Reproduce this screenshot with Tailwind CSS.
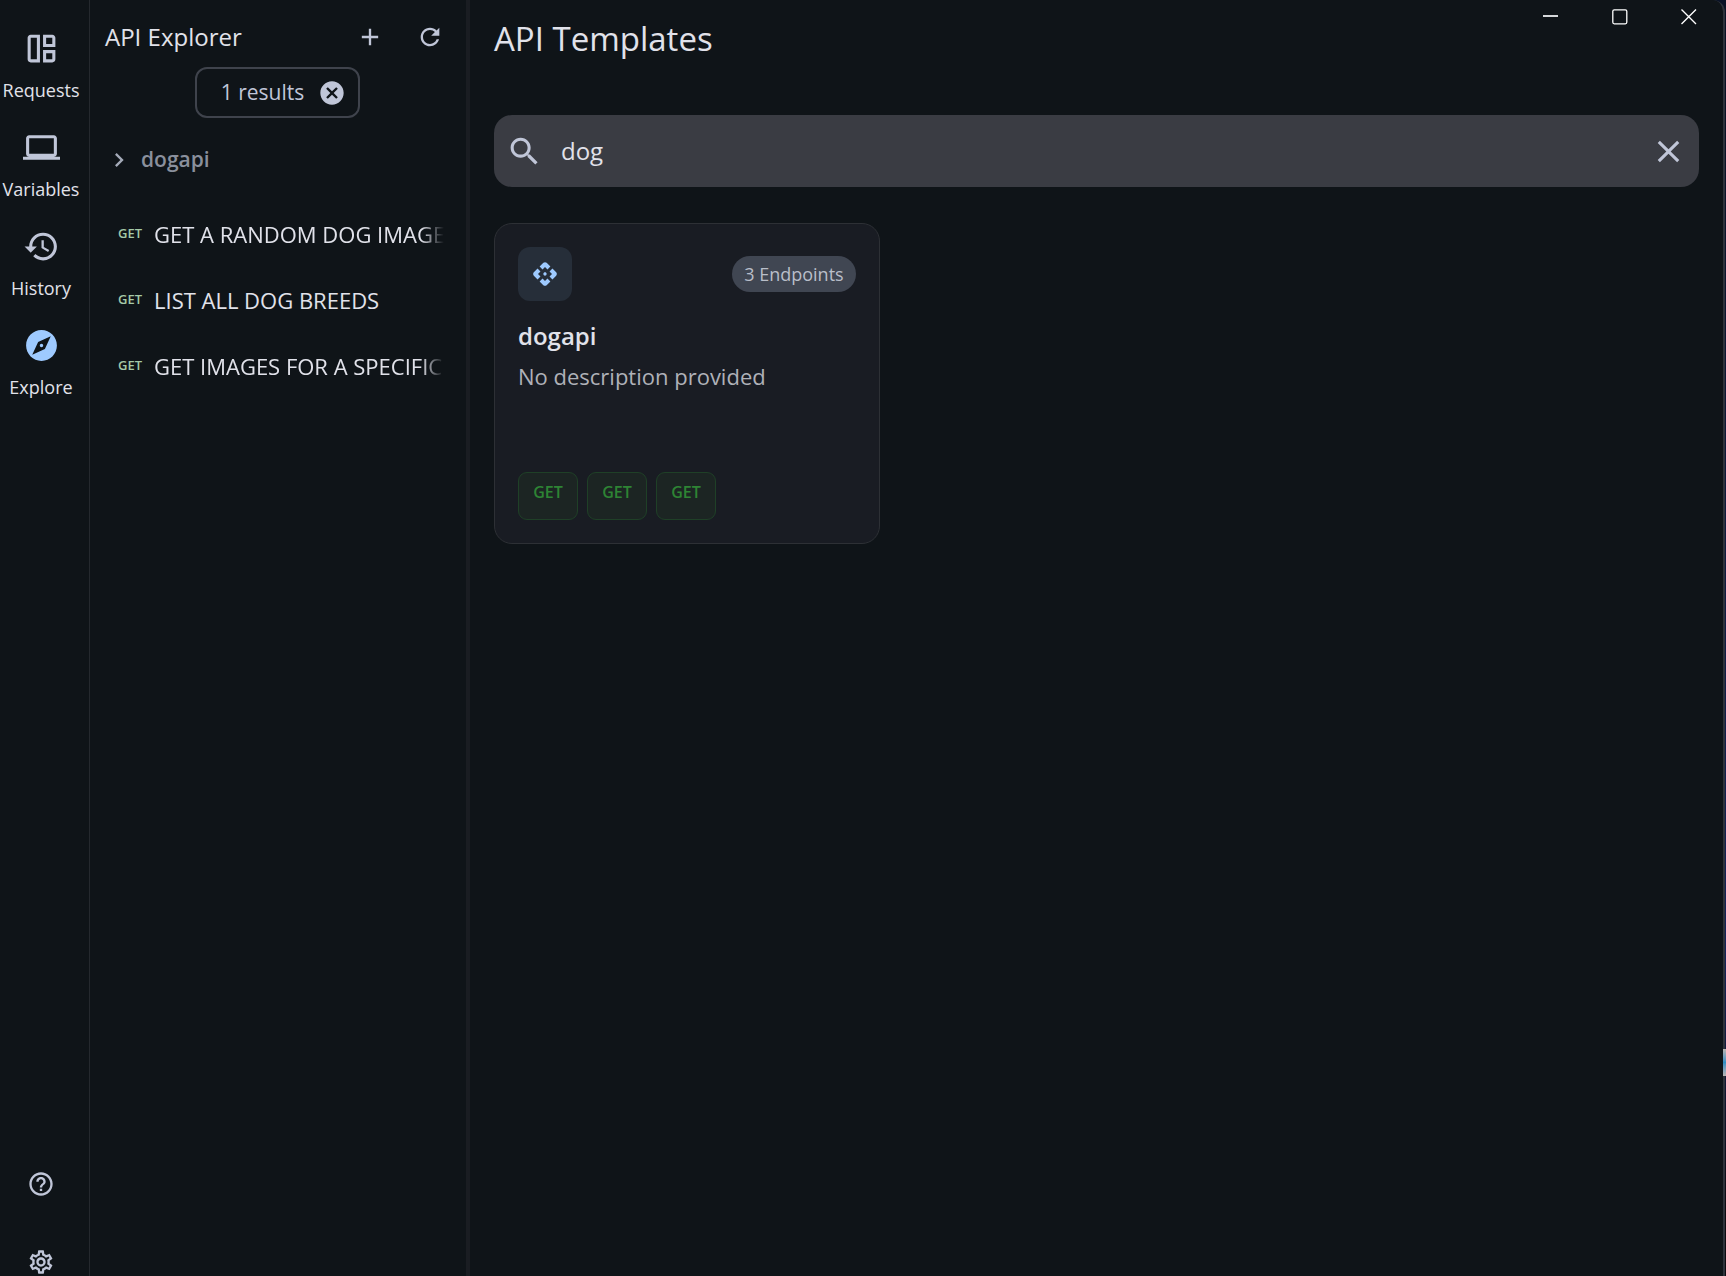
<!DOCTYPE html>
<html lang="en">
<head>
<meta charset="utf-8">
<meta name="viewport" content="width=device-width, initial-scale=1">
<title>API Explorer</title>
<script src="https://cdn.jsdelivr.net/npm/@tailwindcss/browser@4"></script>
</head>
<body class="relative h-screen overflow-hidden bg-linear-to-b from-[#0a1226] from-10% via-[#14235a] via-75% to-[#0c0a10] to-95% font-['Open_Sans',sans-serif] text-[#e1e2ea]">
<div class="mr-px flex h-full rounded-tr-xl border-r-2 border-[#2e333b] bg-[#0f1418]">

  <!-- Navigation rail -->
  <nav class="flex w-[90px] shrink-0 flex-col border-r border-[#25292e] pr-[7px] pt-[30px] text-lg leading-6 text-[#e1e2ea]">
    <a href="#requests" class="flex h-[99px] flex-col items-center gap-[11px]">
      <svg class="size-[37px] fill-[#c0c6d8]" viewBox="0 0 24 24"><path d="M3 5v14c0 1.1.89 2 2 2h6V3H5c-1.11 0-2 .9-2 2zm2 0h4v14H5V5zm14-2h-6v8h8V5c0-1.1-.9-2-2-2zm0 6h-4V5h4v4zm-6 12h6c1.1 0 2-.9 2-2v-6h-8v8zm2-6h4v4h-4v-4z"/></svg>
      <span>Requests</span>
    </a>
    <a href="#variables" class="flex h-[99px] flex-col items-center gap-[11px]">
      <svg class="size-[37px] fill-[#c0c6d8]" viewBox="0 0 24 24"><path d="M20 18c1.1 0 1.99-.9 1.99-2L22 6c0-1.1-.9-2-2-2H4c-1.1 0-2 .9-2 2v10c0 1.1.9 2 2 2H0v2h24v-2h-4zM4 6h16v10H4V6z"/></svg>
      <span>Variables</span>
    </a>
    <a href="#history" class="flex h-[99px] flex-col items-center gap-[11px]">
      <svg class="size-[37px] fill-[#c0c6d8]" viewBox="0 0 24 24"><path d="M13 3c-4.97 0-9 4.03-9 9H1l3.89 3.89.07.14L9 12H6c0-3.87 3.13-7 7-7s7 3.13 7 7-3.13 7-7 7c-1.93 0-3.68-.79-4.94-2.06l-1.42 1.42C8.27 19.99 10.51 21 13 21c4.97 0 9-4.03 9-9s-4.03-9-9-9zm-1 5v5l4.28 2.54.72-1.21-3.5-2.08V8H12z"/></svg>
      <span>History</span>
    </a>
    <a href="#explore" aria-current="page" class="flex h-[99px] flex-col items-center gap-[11px]">
      <svg class="size-[37px] fill-[#9ecaff]" viewBox="0 0 24 24"><path d="M12 10.9c-.61 0-1.1.49-1.1 1.1s.49 1.1 1.1 1.1c.61 0 1.1-.49 1.1-1.1s-.49-1.1-1.1-1.1zM12 2C6.48 2 2 6.48 2 12s4.48 10 10 10 10-4.48 10-10S17.52 2 12 2zm2.19 12.19L6 18l3.81-8.19L18 6l-3.81 8.19z"/></svg>
      <span>Explore</span>
    </a>
    <div class="mt-auto flex flex-col items-center gap-[50px]">
      <button type="button" aria-label="Help"><svg class="size-7 fill-[#c0c6d8]" viewBox="0 0 24 24"><path d="M11 18h2v-2h-2v2zm1-16C6.48 2 2 6.48 2 12s4.48 10 10 10 10-4.48 10-10S17.52 2 12 2zm0 18c-4.41 0-8-3.59-8-8s3.59-8 8-8 8 3.59 8 8-3.59 8-8 8zm0-14c-2.21 0-4 1.79-4 4h2c0-1.1.9-2 2-2s2 .9 2 2c0 2-3 1.75-3 5h2c0-2.25 3-2.5 3-5 0-2.21-1.79-4-4-4z"/></svg></button>
      <button type="button" aria-label="Settings"><svg class="size-7 fill-[#c0c6d8]" viewBox="0 0 24 24"><path d="M19.43 12.98c.04-.32.07-.64.07-.98 0-.34-.03-.66-.07-.98l2.11-1.65c.19-.15.24-.42.12-.64l-2-3.46c-.09-.16-.26-.25-.44-.25-.06 0-.12.01-.17.03l-2.49 1c-.52-.4-1.08-.73-1.69-.98l-.38-2.65C14.46 2.18 14.25 2 14 2h-4c-.25 0-.46.18-.49.42l-.38 2.65c-.61.25-1.17.59-1.69.98l-2.49-1c-.06-.02-.12-.03-.18-.03-.17 0-.34.09-.43.25l-2 3.46c-.13.22-.07.49.12.64l2.11 1.65c-.04.32-.07.65-.07.98 0 .33.03.66.07.98l-2.11 1.65c-.19.15-.24.42-.12.64l2 3.46c.09.16.26.25.44.25.06 0 .12-.01.17-.03l2.49-1c.52.4 1.08.73 1.69.98l.38 2.65c.03.24.24.42.49.42h4c.25 0 .46-.18.49-.42l.38-2.65c.61-.25 1.17-.59 1.69-.98l2.49 1c.06.02.12.03.18.03.17 0 .34-.09.43-.25l2-3.46c.12-.22.07-.49-.12-.64l-2.11-1.65zm-1.98-1.71c.04.31.05.52.05.73 0 .21-.02.43-.05.73l-.14 1.13.89.7 1.08.84-.7 1.21-1.27-.51-1.04-.42-.9.68c-.43.32-.84.56-1.25.73l-1.06.43-.16 1.13-.2 1.35h-1.4l-.19-1.35-.16-1.13-1.06-.43c-.43-.18-.83-.41-1.23-.71l-.91-.7-1.06.43-1.27.51-.7-1.21 1.08-.84.89-.7-.14-1.13c-.03-.31-.05-.54-.05-.74s.02-.43.05-.73l.14-1.13-.89-.7-1.08-.84.7-1.21 1.27.51 1.04.42.9-.68c.43-.32.84-.56 1.25-.73l1.06-.43.16-1.13.2-1.35h1.39l.19 1.35.16 1.13 1.06.43c.43.18.83.41 1.23.71l.91.7 1.06-.43 1.27-.51.7 1.21-1.07.85-.89.7.14 1.13zM12 8c-2.21 0-4 1.79-4 4s1.79 4 4 4 4-1.79 4-4-1.79-4-4-4zm0 6c-1.1 0-2-.9-2-2s.9-2 2-2 2 .9 2 2-.9 2-2 2z"/></svg></button>
    </div>
  </nav>

  <!-- Explorer sidebar -->
  <aside class="flex w-[380px] shrink-0 flex-col border-r-4 border-[#1a1d22] pl-[15px]">
    <header class="flex items-center gap-8 pr-[22px] pt-4">
      <h2 class="flex-1 text-2xl leading-[42px]">API Explorer</h2>
      <button type="button" aria-label="Add"><svg class="size-7 fill-[#c0c6d8]" viewBox="0 0 24 24"><path d="M19 13h-6v6h-2v-6H5v-2h6V5h2v6h6v2z"/></svg></button>
      <button type="button" aria-label="Refresh"><svg class="size-7 fill-[#c0c6d8]" viewBox="0 0 24 24"><path d="M17.65 6.35C16.2 4.9 14.21 4 12 4c-4.42 0-7.99 3.58-7.99 8s3.57 8 7.99 8c3.73 0 6.84-2.55 7.73-6h-2.08c-.82 2.33-3.04 4-5.65 4-3.31 0-6-2.69-6-6s2.69-6 6-6c1.66 0 3.14.69 4.22 1.78L13 11h7V4l-2.35 2.35z"/></svg></button>
    </header>
    <div class="mr-4 mt-[9px] flex h-[51px] items-center gap-[14px] self-center rounded-xl border-2 border-[#3f434c] pl-6 pr-3 text-[21px] text-[#c0c6d8]">
      <span>1 results</span>
      <button type="button" aria-label="Clear results"><svg class="size-7 fill-[#c0c6d8]" viewBox="0 0 24 24"><path d="M12 2C6.47 2 2 6.47 2 12s4.47 10 10 10 10-4.47 10-10S17.53 2 12 2zm5 13.59L15.59 17 12 13.41 8.41 17 7 15.59 10.59 12 7 8.41 8.41 7 12 10.59 15.59 7 17 8.41 13.41 12 17 15.59z"/></svg></button>
    </div>
    <button type="button" class="mt-5 flex h-[44px] items-center gap-2 text-left text-[21px] font-semibold text-[#8a909c]">
      <svg class="size-7 fill-[#a4aab8]" viewBox="0 0 24 24"><path d="M10 6 8.59 7.41 13.17 12l-4.58 4.59L10 18l6-6z"/></svg>
      <span>dogapi</span>
    </button>
    <ul class="mr-[22px] mt-[19px] pl-[13px] text-[22px]">
      <li><a href="#random" class="flex h-[66px] items-center gap-3"><span class="w-6 shrink-0 text-[13px] font-semibold text-[#a5c9a7]">GET</span><span class="flex-1 overflow-hidden whitespace-nowrap mask-r-from-92%">GET A RANDOM DOG IMAGE</span></a></li>
      <li><a href="#breeds" class="flex h-[66px] items-center gap-3"><span class="w-6 shrink-0 text-[13px] font-semibold text-[#a5c9a7]">GET</span><span class="flex-1 overflow-hidden whitespace-nowrap">LIST ALL DOG BREEDS</span></a></li>
      <li><a href="#breed-images" class="flex h-[66px] items-center gap-3"><span class="w-6 shrink-0 text-[13px] font-semibold text-[#a5c9a7]">GET</span><span class="flex-1 overflow-hidden whitespace-nowrap mask-r-from-92%">GET IMAGES FOR A SPECIFIC</span></a></li>
    </ul>
  </aside>

  <!-- Templates -->
  <main class="min-w-0 flex-1 px-6">
    <header class="-mr-[5px] flex h-[115px] items-start justify-between">
      <h1 class="pt-4 text-[33px] leading-[46px]">API Templates</h1>
      <div class="flex gap-[39px] pt-0.5">
        <button type="button" aria-label="Minimize" class="size-[30px] p-[7px]"><svg class="size-4 stroke-[#d5d7da]" viewBox="0 0 16 16" fill="none" stroke-width="2"><path d="M0 7h15"/></svg></button>
        <button type="button" aria-label="Maximize" class="size-[30px] p-[7px]"><svg class="size-4 stroke-white" viewBox="0 0 16 16" fill="none" stroke-width="1.3"><rect x=".8" y=".8" width="14" height="14" rx="1.5"/></svg></button>
        <button type="button" aria-label="Close" class="size-[30px] p-[7px]"><svg class="size-4 stroke-white" viewBox="0 0 16 16" fill="none" stroke-width="1.4"><path d="m.5.5 14.5 14.5M15 .5.5 15"/></svg></button>
      </div>
    </header>

    <div class="flex h-[72px] items-center gap-[18px] rounded-[18px] bg-[#3a3c43] px-3">
      <svg class="size-[37px] shrink-0 fill-[#c0c6d8]" viewBox="0 0 24 24"><path d="M15.5 14h-.79l-.28-.27C15.41 12.59 16 11.11 16 9.5 16 5.91 13.09 3 9.5 3S3 5.91 3 9.5 5.91 16 9.5 16c1.61 0 3.09-.59 4.23-1.57l.27.28v.79l5 4.99L20.49 19l-4.99-5zm-6 0C7.01 14 5 11.99 5 9.5S7.01 5 9.5 5 14 7.01 14 9.5 11.99 14 9.5 14z"/></svg>
      <input type="text" value="dog" aria-label="Search templates" class="min-w-0 flex-1 bg-transparent text-2xl outline-none">
      <button type="button" aria-label="Clear search"><svg class="size-[37px] fill-[#c0c6d8]" viewBox="0 0 24 24"><path d="M19 6.41 17.59 5 12 10.59 6.41 5 5 6.41 10.59 12 5 17.59 6.41 19 12 13.41 17.59 19 19 17.59 13.41 12z"/></svg></button>
    </div>

    <section class="mt-9 grid grid-cols-3 gap-6">
      <article class="flex h-[321px] flex-col rounded-[18px] border border-[#2d3035] bg-[#191c23] p-[23px]">
        <div class="flex items-center justify-between">
          <span class="flex size-[54px] items-center justify-center rounded-xl bg-[#262e39]"><svg class="size-7 fill-[#9ecaff]" viewBox="0 0 24 24"><path d="M13 13c-.56.56-1.44.56-2 0s-.56-1.44 0-2 1.44-.56 2 0 .56 1.44 0 2zm-1-7 2.12 2.12 2.5-2.5-3.2-3.2c-.78-.78-2.05-.78-2.83 0l-3.2 3.2 2.5 2.5L12 6zm-6 6 2.12-2.12-2.5-2.5-3.2 3.2c-.78.78-.78 2.05 0 2.83l3.2 3.2 2.5-2.5L6 12zm12 0-2.12 2.12 2.5 2.5 3.2-3.2c.78-.78.78-2.05 0-2.83l-3.2-3.2-2.5 2.5L18 12zm-6 6-2.12-2.12-2.5 2.5 3.2 3.2c.78.78 2.05.78 2.83 0l3.2-3.2-2.5-2.5L12 18z"/></svg></span>
          <span class="flex h-9 items-center rounded-full bg-[#404652] px-3 text-lg text-[#b9bec9]">3 Endpoints</span>
        </div>
        <h3 class="mt-[19px] text-2xl font-semibold leading-8">dogapi</h3>
        <p class="mt-2 text-[22px] leading-8 text-[#afb1b8]">No description provided</p>
        <div class="mt-auto flex gap-[9px] text-base font-semibold leading-6 text-[#2e8434]">
          <span class="h-12 w-[60px] rounded-[9px] border border-[#1f4027] bg-[#1c2523] pt-[7px] text-center">GET</span>
          <span class="h-12 w-[60px] rounded-[9px] border border-[#1f4027] bg-[#1c2523] pt-[7px] text-center">GET</span>
          <span class="h-12 w-[60px] rounded-[9px] border border-[#1f4027] bg-[#1c2523] pt-[7px] text-center">GET</span>
        </div>
      </article>
    </section>
  </main>
</div>
<!-- Desktop shortcut peeking out behind the window edge -->
<div class="absolute right-0 top-[1049px] h-[27px] w-[3px] bg-linear-to-b from-[#b9b5b2] via-[#2f8fc4] to-[#b9b5b2]"></div>
</body>
</html>
